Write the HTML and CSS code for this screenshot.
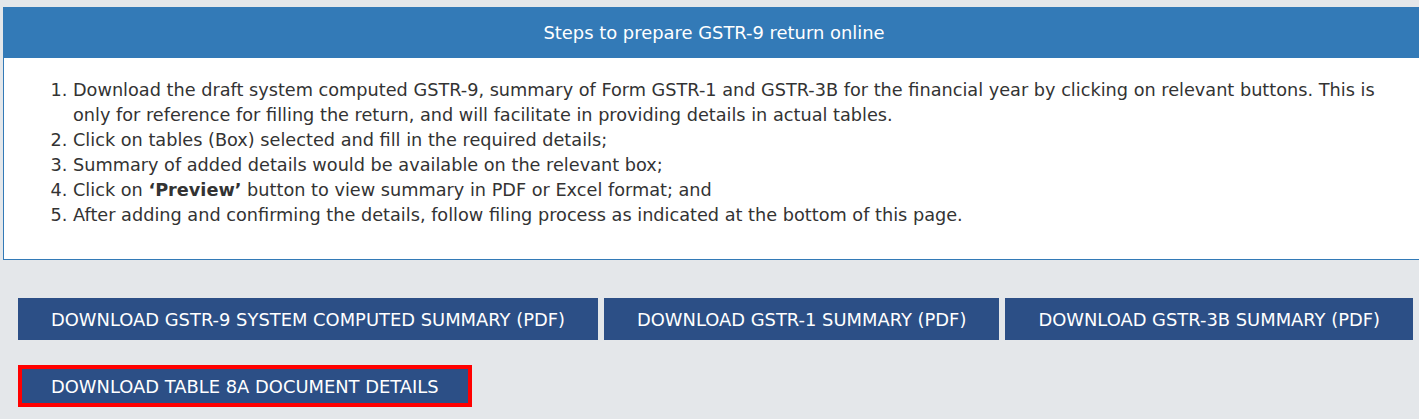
FILE: index.html
```html
<!DOCTYPE html>
<html lang="en">
<head>
<meta charset="UTF-8">
<meta name="viewport" content="width=device-width, initial-scale=1.0">
<title>GSTR-9 Return</title>
<link rel="stylesheet" href="styles.css">
</head>
<body>

<div class="panel">
  <div class="panel-heading">Steps to prepare GSTR-9 return online</div>
  <div class="panel-body">
    <ol>
      <li>Download the draft system computed GSTR-9, summary of Form GSTR-1 and GSTR-3B for the financial year by clicking on relevant buttons. This is only for reference for filling the return, and will facilitate in providing details in actual tables.</li>
      <li>Click on tables (Box) selected and fill in the required details;</li>
      <li>Summary of added details would be available on the relevant box;</li>
      <li>Click on <strong>&lsquo;Preview&rsquo;</strong> button to view summary in PDF or Excel format; and</li>
      <li>After adding and confirming the details, follow filing process as indicated at the bottom of this page.</li>
    </ol>
  </div>
</div>

<div class="actions">
  <div class="btn-row">
    <button type="button" class="btn">Download GSTR-9 System Computed Summary (PDF)</button>
    <button type="button" class="btn">Download GSTR-1 Summary (PDF)</button>
    <button type="button" class="btn">Download GSTR-3B Summary (PDF)</button>
  </div>
  <div class="btn-row">
    <button type="button" class="btn highlight">Download Table 8A Document Details</button>
  </div>
</div>

</body>
</html>
```

FILE: styles.css
```css
html, body {
  overflow: hidden;
}
body {
  font-family: "DejaVu Sans", Verdana, sans-serif;
  font-size: 17.7px;
  color: #333;
  margin: 0;
  padding: 7px 0 0 3px;
  background-color: #e4e7ea;
}
.panel {
  width: 1430px;
  background-color: #fff;
  border: 1px solid #337ab7;
}
.panel-heading {
  height: 51px;
  margin: -1px -1px 0 -1px;
  background-color: #337ab7;
  color: #fff;
  font-size: 17.9px;
  text-align: center;
  line-height: 51px;
  padding-right: 10px;
}
.panel-body {
  padding: 20px 15px 31px 15px;
}
.panel-body ol {
  margin: 0;
  padding-left: 54px;
  line-height: 25px;
}
.panel-body li {
  padding-right: 30px;
}
.actions {
  padding: 38px 0 0 15px;
}
.btn-row {
  display: flex;
  gap: 6px;
  margin-bottom: 25px;
}
.btn {
  height: 42px;
  padding: 0 33px;
  border: none;
  background-color: #2c4f86;
  color: #fff;
  font-family: inherit;
  font-size: 17.9px;
  text-transform: uppercase;
  cursor: pointer;
}
.btn:hover {
  background-color: #23406e;
}
.highlight {
  outline: 4px solid #f00;
  outline-offset: -4px;
}
```
